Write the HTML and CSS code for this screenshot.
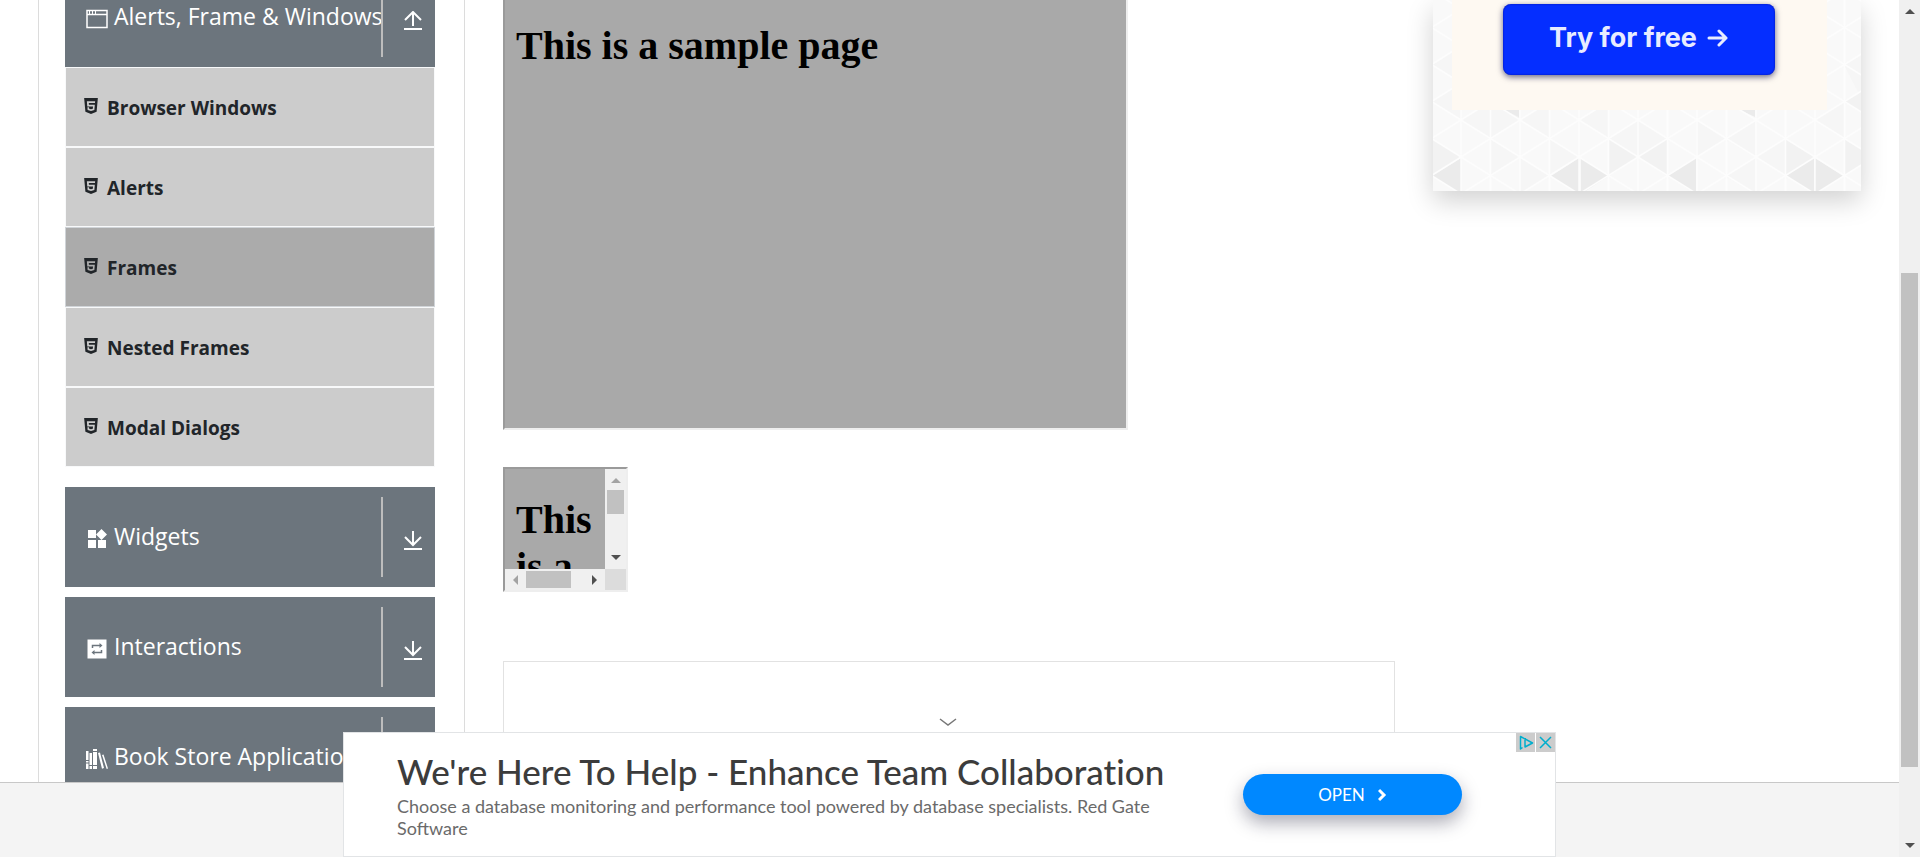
FILE: index.html
```html
<!DOCTYPE html>
<html lang="en">
<head>
<meta charset="utf-8">
<meta name="viewport" content="width=device-width, initial-scale=1">
<title>Frames</title>
<link rel="stylesheet" href="styles.css">
</head>
<body>
<svg class="defs" aria-hidden="true">
  <symbol id="html5" viewBox="0 0 384 448"><path fill="currentColor" fill-rule="evenodd" d="M0 0h384l-35 387-157 61-157-61zM308 90H76l12 146h161l-6 62-51 14-51-14-4-38H92l6 78 94 27 94-27 13-149H134l-4-51h174z"/></symbol>
  <symbol id="down" viewBox="0 0 18 19"><path fill="none" stroke="currentColor" stroke-width="2" d="M9 0v14M1 6l8 8 8-8M0 18h18"/></symbol>
  <symbol id="up" viewBox="0 0 18 19"><path fill="none" stroke="currentColor" stroke-width="2" d="M9 15V1M1 9l8-8 8 8M0 18h18"/></symbol>
</svg>
<div class="window">
  <div class="view">
    <div class="scroller">
      <div class="content">
        <nav class="sidebar" aria-label="Sections">
          <div class="group">
            <button class="group-head" type="button">
              <svg class="group-icon" viewBox="0 0 22 22"><path fill="none" stroke="currentColor" stroke-width="1.5" d="M1 2.500h20v17H1zM1 6.500h20"/><path fill="none" stroke="currentColor" stroke-width="1" d="M3.500 3v3M6.500 3v3M9.500 3v3"/></svg>
              <span class="group-name">Alerts, Frame &amp; Windows</span>
              <span class="group-toggle"><svg class="arrow"><use href="#up"/></svg></span>
            </button>
            <ul class="menu">
              <li><a class="item" href="#browser-windows"><svg class="item-icon"><use href="#html5"/></svg>Browser Windows</a></li>
              <li><a class="item" href="#alerts"><svg class="item-icon"><use href="#html5"/></svg>Alerts</a></li>
              <li><a class="item active" href="#frames"><svg class="item-icon"><use href="#html5"/></svg>Frames</a></li>
              <li><a class="item" href="#nested-frames"><svg class="item-icon"><use href="#html5"/></svg>Nested Frames</a></li>
              <li><a class="item" href="#modal-dialogs"><svg class="item-icon"><use href="#html5"/></svg>Modal Dialogs</a></li>
            </ul>
          </div>
          <button class="group-head" type="button">
            <svg class="group-icon" viewBox="0 0 22 22"><path fill="currentColor" d="M2 2h8v8H2zM2 12h8v8H2zM12 12h8v8h-8zM15.500 1l5.500 5.500-5.500 5.500L10 6.500z"/></svg>
            <span class="group-name">Widgets</span>
            <span class="group-toggle"><svg class="arrow"><use href="#down"/></svg></span>
          </button>
          <button class="group-head" type="button">
            <svg class="group-icon" viewBox="0 0 22 22"><path fill="currentColor" d="M1.500 1.500h19v19h-19z"/><g class="cut"><path d="M6.500 10V7.500h8.500M15.500 12v2.500H7"/><path class="cut-fill" d="M13.500 5l3 2.500-3 2.500zM8.500 12l-3 2.500 3 2.500z"/></g></svg>
            <span class="group-name">Interactions</span>
            <span class="group-toggle"><svg class="arrow"><use href="#down"/></svg></span>
          </button>
          <button class="group-head" type="button">
            <svg class="group-icon" viewBox="0 0 22 22"><path fill="currentColor" d="M0 3h2.500v9H0zM0 13h2.500v1.500H0zM0 15.500h2.500V21H0zM3.500 5H6v12H3.500zM3.500 18H6v3H3.500zM7 1h4v2H7zM7 4h4v13H7zM7 18h4v3H7zM12 5l2-.5 4 15.500-2 .8zM16 7l1.500-.5L22 20.500l-1.300.5z"/></svg>
            <span class="group-name">Book Store Application</span>
            <span class="group-toggle"><svg class="arrow"><use href="#down"/></svg></span>
          </button>
        </nav>

        <main class="main">
          <section class="frame frame-large"><h1 class="sample">This is a sample page</h1></section>
          <section class="frame frame-small">
            <div class="frame-body"><h1 class="sample">This is a sample page</h1></div>
            <div class="bar bar-v"><i class="tri tri-up off"></i><i class="thumb"></i><i class="tri tri-down"></i></div>
            <div class="bar bar-h"><i class="tri tri-left off"></i><i class="thumb"></i><i class="tri tri-right"></i></div>
            <div class="corner"></div>
          </section>
          <div class="slot"></div>
        </main>

        <aside class="promo">
          <svg class="mesh" viewBox="0 0 428 191" preserveAspectRatio="xMidYMax slice" aria-hidden="true">
            <defs><pattern id="grid" width="59" height="37" x="28" y="9" patternUnits="userSpaceOnUse"><path fill="none" stroke="#fdfdfd" stroke-width="1.500" d="M0 0v37M29.500 0v37M59 0v37M0 0l59 37M0 37L59 0"/></pattern></defs>
            <path fill="#f9f9f9" d="M0 0h428v191H0z"/>
            <path fill="#f6f6f6" d="M-1 102l29-19v37zM28 120l29-18v37zM57 102l30 18-30 19zM-1 139l29 18-29 19zM87 120l29-18v37zM116 139l31 18-31 19zM147 120l29-18v37zM176 139l29 18v-37zM205 120l29 19-29 18zM263 120l29 19-29 18zM292 139l30-19v37zM322 157l30-18v37zM381 120l30-18v37zM0 65l28-19v37zM411 65l18-10v45zM57 139l30 18-30 19zM87 157l29 19-29 18zM234 176l29-19v37zM292 176l30-19v37z"/>
            <path fill="#f2f2f2" d="M-1 139l29 18-29 19zM176 139l29 18-29 19zM205 157l29-18v37zM352 139l29 18-29 19zM411 139l18 11v15l-18 11zM411 102l18-10v20zM57 102l29 18v-10z"/>
            <path fill="#ebebeb" d="M-1 176l29-18v36zM118 176l28-18v36zM148 158l28 18-28 18zM235 176l28-18v36zM353 176l28-18v36zM382 158l28 18-28 18zM71 110h15v7zM307 110h15v7z"/>
            <path fill="url(#grid)" d="M0 0h428v191H0z"/>
          </svg>
          <div class="promo-card"><a class="promo-button" href="#try">Try for free <svg class="promo-arrow" viewBox="0 0 22 18"><path fill="none" stroke="currentColor" stroke-width="3" stroke-linecap="round" stroke-linejoin="round" d="M2 9h17M12 2l7 7-7 7"/></svg></a></div>
        </aside>
      </div>
    </div>
    <footer class="footer"></footer>

    <section class="banner" aria-label="Advertisement">
      <button class="collapse" type="button" aria-label="Collapse"><svg class="chevron" viewBox="0 0 18 8"><path fill="none" stroke="#777" stroke-width="1.500" d="M1 1l8 6 8-6"/></svg></button>
      <div class="banner-copy">
        <h2 class="banner-title">We're Here To Help - Enhance Team Collaboration</h2>
        <p class="banner-text">Choose a database monitoring and performance tool powered by database specialists. Red Gate Software</p>
      </div>
      <a class="open" href="#open">OPEN <svg class="open-arrow" viewBox="0 0 9 14"><path fill="none" stroke="currentColor" stroke-width="3" d="M1 2l5 5-5 5"/></svg></a>
      <div class="choices">
        <button class="choice" type="button" aria-label="Ad choices"><svg viewBox="0 0 19 19"><path fill="none" stroke="#00aecd" stroke-width="1.500" stroke-linejoin="round" d="M6.500 14.500L4.500 16V3.500L16.500 10 9 14V7"/><path fill="#00aecd" d="M8.500 5h1.500v1.500H8.500z"/></svg></button>
        <button class="choice" type="button" aria-label="Close ad"><svg viewBox="0 0 19 19"><path fill="none" stroke="#00aecd" stroke-width="1.500" d="M4 4l11 11M15 4L4 15"/></svg></button>
      </div>
    </section>
  </div>
  <div class="bar bar-v page-bar"><i class="tri tri-up"></i><i class="thumb"></i><i class="tri tri-down"></i></div>
</div>
</body>
</html>
```
FILE: styles.css
```css
* { box-sizing: border-box; }
body { margin: 0; background: #fff; color: #212529; font-family: "Open Sans", "Noto Sans", sans-serif; }
button { border: 0; padding: 0; font: inherit; color: inherit; background: none; cursor: pointer; }
a { color: inherit; text-decoration: none; }
.defs { position: absolute; width: 0; height: 0; }

.window { display: flex; height: 100vh; overflow: hidden; }
.view { position: relative; flex: 1; min-width: 0; display: flex; flex-direction: column; }
.scroller { flex: 1; min-height: 0; overflow: hidden; }
.content { display: grid; grid-template-columns: 427fr 892fr 428fr; gap: 38px; padding: 0 38px; height: 100%; }
.footer { flex: none; height: 75px; border-top: 1px solid #c8c8c8; background: #f4f4f4; }

.sidebar { display: flex; flex-direction: column; gap: 10px; min-width: 0; padding: 0 29px 0 26px; border: solid #dcdcdc; border-width: 0 1px; margin-bottom: -100px; }
.group { margin: -33px 0 10px; }
.group-head { display: flex; flex: none; align-items: center; width: 100%; height: 100px; padding: 0 13px 0 21px; background: #6c757d; color: #fff; font-size: 23px; text-align: left; }
.group-icon { flex: none; width: 22px; height: 22px; margin: 4px 6px 0 0; }
.group-name { flex: 1; min-width: 0; padding-bottom: 2px; white-space: nowrap; }
.group-toggle { display: flex; align-items: center; height: 80px; padding: 6px 0 0 21px; border-left: 2px solid #bdbdbd; }
.arrow { width: 18px; height: 19px; }
.cut { fill: none; stroke: #6c757d; stroke-width: 1.5; }
.cut-fill { fill: #6c757d; stroke: none; }
.menu { margin: 0; padding: 0; list-style: none; }
.item { display: flex; align-items: center; height: 80px; padding: 2px 17px 0; border: 1px solid #f8f9fa; background: #ccc; font-size: 19px; font-weight: 700; }
.item.active { background: #ababab; border-color: #d0d4d8; }
.item-icon { width: 16px; height: 16px; margin: 0 8px 4px 0; }

.main { min-width: 0; display: flex; flex-direction: column; }
.frame { flex: none; border: 2px inset #eee; background: #a9a9a9; overflow: hidden; }
.frame-large { width: 625px; max-width: 100%; height: 437px; margin-top: -7px; padding: 0 11px; }
.frame-small { display: grid; grid-template: 100px 21px / 100px 21px; width: 125px; height: 125px; margin-top: 37px; }
.frame-body { padding: 0 11px; overflow: hidden; }
.sample { margin: 27px 0 0; color: #000; font: bold 40px/47px "Liberation Serif", serif; }
.slot { flex: 1; margin-top: 69px; border: solid #e2e2e2; border-width: 1px 1px 0; }

.bar { display: flex; align-items: center; background: #f0f0f0; }
.bar-v { flex-direction: column; padding: 9px 2px; }
.bar-h { padding: 2px 8px; }
.thumb { background: #c1c1c1; }
.bar-v .thumb { width: 17px; height: 24px; margin: 7px 0 auto; }
.bar-h .thumb { width: 45px; height: 17px; margin: 0 auto 0 8px; }
.tri { flex: none; border: solid transparent; color: #505050; }
.tri.off { color: #a3a3a3; }
.tri-up { border-width: 0 5px 5px; border-bottom-color: currentColor; }
.tri-down { border-width: 5px 5px 0; border-top-color: currentColor; }
.tri-left { border-width: 5px 5px 5px 0; border-right-color: currentColor; }
.tri-right { border-width: 5px 0 5px 5px; border-left-color: currentColor; }
.corner { background: #dcdcdc; }
.page-bar { flex: none; width: 21px; }
.page-bar .thumb { height: 494px; margin: auto 0 76px; }

.promo { position: relative; align-self: start; min-width: 0; height: 191px; padding: 0 34px 0 19px; box-shadow: 0 10px 25px rgba(0, 0, 0, .18); }
.mesh { position: absolute; inset: 0; width: 100%; height: 100%; }
.promo-card { position: relative; height: 110px; padding: 4px 52px 0 51px; background: #fef9f2; }
.promo-button { display: flex; align-items: center; justify-content: center; gap: 10px; height: 71px; padding-bottom: 4px; border-radius: 8px; background: #052eff; color: #e8ecff; box-shadow: 0 2px 6px rgba(0, 0, 60, .6), inset 0 0 2px #0010a0; font: 700 27px/32px Inter, sans-serif; white-space: nowrap; }
.promo-arrow { width: 22px; height: 18px; }

.banner { position: absolute; bottom: 0; left: 0; right: 0; display: flex; align-items: center; width: 1213px; max-width: 100%; height: 125px; margin: 0 auto; padding: 0 93px 0 53px; border: 1px solid #e2e4e6; background: #fff; }
.banner-copy { flex: 1; min-width: 0; padding-right: 50px; }
.banner-title { margin: 0; color: #3c3c3c; font: 500 35px/40px Lato, sans-serif; font-variant-ligatures: none; white-space: nowrap; }
.banner-text { margin: 4px 0 0; color: #6a6a6a; font: 18px/22px Lato, sans-serif; }
.open { display: flex; align-items: center; justify-content: center; gap: 13px; width: 219px; height: 41px; border-radius: 21px; background: #08f; color: #fff; box-shadow: 0 8px 18px rgba(20, 20, 50, .35); font: 17px/20px Lato, sans-serif; }
.open-arrow { width: 9px; height: 14px; }
.collapse { position: absolute; left: 50%; bottom: 100%; width: 50px; height: 22px; margin-left: -27px; }
.chevron { display: block; width: 18px; height: 8px; margin: 0 auto; }
.choices { position: absolute; top: 0; right: 0; display: flex; gap: 1px; }
.choice { width: 19px; height: 19px; background: #ccc; }
.choice svg { display: block; }
```
